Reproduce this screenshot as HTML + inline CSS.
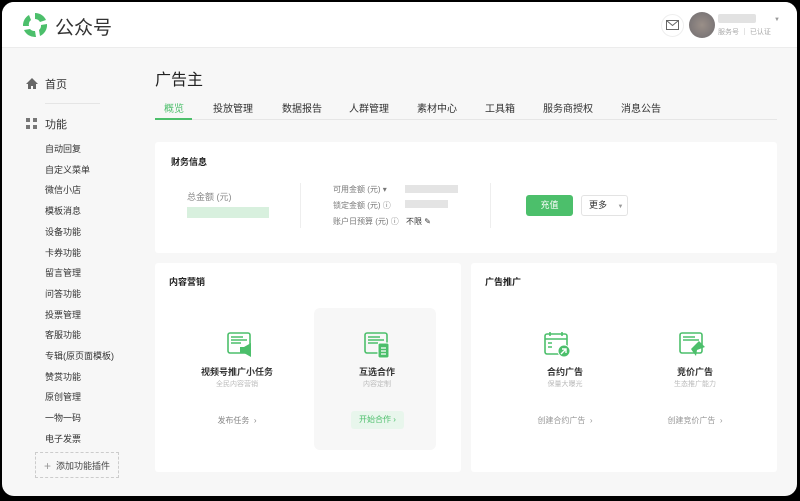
<!DOCTYPE html>
<html><head><meta charset="utf-8"><style>
*{margin:0;padding:0;box-sizing:border-box}
body{width:800px;height:501px;background:#000;font-family:"Liberation Sans","Noto Sans CJK SC",sans-serif;overflow:hidden;position:relative}
.win{position:absolute;left:2px;top:2px;width:795px;height:494px;background:#f7f7f7;border-radius:12px;overflow:hidden}
.hdr{position:absolute;left:0;top:0;width:100%;height:46px;background:#fff;border-bottom:1px solid #ececec}
.a{position:absolute;white-space:nowrap}
.side{font-size:9px;color:#333}
.card{position:absolute;background:#fff;border-radius:3px}
.t9{font-size:9px;color:#555}
.tab{font-size:10px;color:#333;top:98px}
</style></head><body><div class="win">
<div class="hdr">
<svg class="a" style="left:20px;top:10px" width="26" height="26" viewBox="0 0 26 26"><path d="M13 1a12 12 0 0 1 11 7l-6 2a6 6 0 0 0-5-3z" fill="#4cbf6b"/><path d="M25 12a12 12 0 0 1-7 12l-1-6a6 6 0 0 0 2-5z" fill="#4cbf6b"/><path d="M14 25A12 12 0 0 1 2 18l6-1a6 6 0 0 0 5 2z" fill="#4cbf6b"/><path d="M1 14A12 12 0 0 1 7 3l2 5a6 6 0 0 0-2 6z" fill="#4cbf6b"/></svg>
<div class="a" style="left:53px;top:11px;font-size:19px;color:#333">公众号</div>
<div class="a" style="left:659px;top:12px;width:23px;height:23px;border:1px solid #eee;border-radius:50%"></div>
<svg class="a" style="left:664px;top:18px" width="13" height="10"><rect x=".5" y=".5" width="12" height="9" fill="none" stroke="#666"/><path d="M.5 .5l6 5 6-5" fill="none" stroke="#666"/></svg>
<div class="a" style="left:687px;top:10px;width:26px;height:26px;border-radius:50%;background:radial-gradient(#9a8f88,#6f6c70)"></div>
<div class="a" style="left:716px;top:12px;width:38px;height:9px;background:#e2e2e2;border-radius:2px"></div>
<div class="a" style="left:716px;top:25px;font-size:7px;color:#aaa">服务号 ｜ 已认证</div>
<div class="a" style="left:772px;top:15px;font-size:6px;color:#999">▼</div>
</div>
<svg class="a" style="left:24px;top:76px" width="12" height="11"><path d="M6 0L0 6h2v5h3V8h2v3h3V6h2z" fill="#666"/></svg>
<div class="a side" style="left:43px;top:74px;font-size:11px">首页</div>
<div class="a" style="left:43px;top:101px;width:55px;height:1px;background:#e5e5e5"></div>
<svg class="a" style="left:24px;top:116px" width="11" height="11" fill="#777"><rect width="4" height="4"/><rect x="7" width="4" height="4"/><rect y="7" width="4" height="4"/><rect x="7" y="7" width="4" height="4"/></svg>
<div class="a side" style="left:43px;top:114px;font-size:11px">功能</div>
<div class="a side" style="left:43px;top:137px;line-height:20.7px">自动回复<br>自定义菜单<br>微信小店<br>模板消息<br>设备功能<br>卡券功能<br>留言管理<br>问答功能<br>投票管理<br>客服功能<br>专辑(原页面模板)<br>赞赏功能<br>原创管理<br>一物一码<br>电子发票</div>
<div class="a" style="left:33px;top:450px;width:84px;height:26px;border:1px dashed #ccc;font-size:9px;color:#444;padding:6px 0 0 8px"><span style="color:#999;font-size:12px;vertical-align:-1px">+</span>&nbsp; 添加功能插件</div>
<div class="a" style="left:153px;top:64px;font-size:16px;color:#222">广告主</div>
<div class="a tab" style="left:162px;color:#4cbf6b">概览</div>
<div class="a tab" style="left:211px">投放管理</div>
<div class="a tab" style="left:280px">数据报告</div>
<div class="a tab" style="left:347px">人群管理</div>
<div class="a tab" style="left:415px">素材中心</div>
<div class="a tab" style="left:483px">工具箱</div>
<div class="a tab" style="left:541px">服务商授权</div>
<div class="a tab" style="left:619px">消息公告</div>
<div class="a" style="left:153px;top:117px;width:622px;height:1px;background:#e6e6e6"></div>
<div class="a" style="left:153px;top:116px;width:37px;height:2px;background:#4cbf6b"></div>
<div class="card" style="left:153px;top:140px;width:622px;height:111px">
<div class="a" style="left:16px;top:13px;font-size:9px;color:#222;font-weight:bold">财务信息</div>
<div class="a t9" style="left:32px;top:48px;color:#888">总金额 (元)</div>
<div class="a" style="left:32px;top:65px;width:82px;height:11px;background:#d8f0de"></div>
<div class="a" style="left:145px;top:41px;width:1px;height:45px;background:#eee"></div>
<div class="a" style="left:178px;top:40px;line-height:16px;color:#777;font-size:8px">可用金额 (元) ▾<br>锁定金额 (元) ⓘ<br>账户日预算 (元) ⓘ</div>
<div class="a" style="left:250px;top:43px;width:53px;height:8px;background:#e4e4e4"></div>
<div class="a" style="left:250px;top:58px;width:43px;height:8px;background:#e4e4e4"></div>
<div class="a" style="left:251px;top:74px;color:#333;font-size:8px">不限 ✎</div>
<div class="a" style="left:335px;top:41px;width:1px;height:45px;background:#eee"></div>
<div class="a" style="left:371px;top:53px;width:47px;height:21px;background:#4cbf6b;border-radius:3px;color:#fff;font-size:9px;text-align:center;line-height:21px">充值</div>
<div class="a" style="left:426px;top:53px;width:47px;height:21px;border:1px solid #e3e3e3;border-radius:3px;font-size:9px;color:#333;line-height:19px;padding-left:7px">更多 <span style="font-size:6px;color:#999;margin-left:8px">▼</span></div>
</div>
<div class="card" style="left:153px;top:261px;width:306px;height:209px">
<div class="a" style="left:14px;top:12px;font-size:9px;font-weight:bold;color:#222">内容营销</div>
<div class="a" style="left:159px;top:45px;width:122px;height:142px;background:#f7f7f7;border-radius:6px"></div>
</div>
<div class="card" style="left:469px;top:261px;width:306px;height:209px">
<div class="a" style="left:14px;top:12px;font-size:9px;font-weight:bold;color:#222">广告推广</div>
</div>
<svg class="a" style="left:224px;top:329px" width="32" height="28" fill="none" stroke="#4cbf6b" stroke-width="1.6"><rect x="2" y="2" width="22" height="20" rx="2"/><path d="M5 6h12M5 9h16M5 12h10"/><path d="M14 16h4v6h-4zM18 16l7-4v14l-7-4z" fill="#4cbf6b" stroke="none"/></svg>
<svg class="a" style="left:361px;top:329px" width="32" height="28" fill="none" stroke="#4cbf6b" stroke-width="1.6"><rect x="2" y="2" width="22" height="20" rx="2"/><path d="M5 6h12M5 9h16M5 12h10"/><rect x="15" y="12" width="11" height="15" rx="2" fill="#4cbf6b" stroke="#fff" stroke-width="1"/><path d="M18 17h5M18 20h5M18 23h5" stroke="#fff" stroke-width="1.2"/></svg>
<svg class="a" style="left:541px;top:329px" width="32" height="28" fill="none" stroke="#4cbf6b" stroke-width="1.6"><rect x="2" y="3" width="22" height="20" rx="2"/><path d="M2 8h22M7 1v4M19 1v4M5 12h4M5 16h4"/><circle cx="21" cy="20" r="6" fill="#4cbf6b" stroke="#fff" stroke-width="1"/><path d="M18 23l5-5M19 18h4v4" stroke="#fff" stroke-width="1.4"/></svg>
<svg class="a" style="left:676px;top:329px" width="32" height="28" fill="none" stroke="#4cbf6b" stroke-width="1.6"><rect x="2" y="2" width="22" height="20" rx="2"/><path d="M5 6h12M5 9h16"/><path d="M13 18l8-8 6 6-8 3-1 6-3-4z" fill="#4cbf6b" stroke="none"/></svg>
<div class="a" style="left:155px;top:363px;width:160px;text-align:center;font-size:9px;font-weight:bold;color:#333">视频号推广小任务</div>
<div class="a" style="left:155px;top:377px;width:160px;text-align:center;font-size:7px;color:#bbb">全民内容营销</div>
<div class="a" style="left:155px;top:413px;width:160px;text-align:center;font-size:8px;color:#888">发布任务 &nbsp;›</div>
<div class="a" style="left:314px;top:363px;width:122px;text-align:center;font-size:9px;font-weight:bold;color:#333">互选合作</div>
<div class="a" style="left:314px;top:377px;width:122px;text-align:center;font-size:7px;color:#bbb">内容定制</div>
<div class="a" style="left:349px;top:409px;width:53px;height:18px;background:#e8f6ec;border-radius:3px;text-align:center;line-height:18px;font-size:8px;color:#4cbf6b">开始合作 ›</div>
<div class="a" style="left:483px;top:363px;width:160px;text-align:center;font-size:9px;font-weight:bold;color:#333">合约广告</div>
<div class="a" style="left:483px;top:377px;width:160px;text-align:center;font-size:7px;color:#bbb">保量大曝光</div>
<div class="a" style="left:483px;top:413px;width:160px;text-align:center;font-size:8px;color:#999">创建合约广告 &nbsp;›</div>
<div class="a" style="left:613px;top:363px;width:160px;text-align:center;font-size:9px;font-weight:bold;color:#333">竞价广告</div>
<div class="a" style="left:613px;top:377px;width:160px;text-align:center;font-size:7px;color:#bbb">生态推广能力</div>
<div class="a" style="left:613px;top:413px;width:160px;text-align:center;font-size:8px;color:#999">创建竞价广告 &nbsp;›</div>
</div></body></html>
